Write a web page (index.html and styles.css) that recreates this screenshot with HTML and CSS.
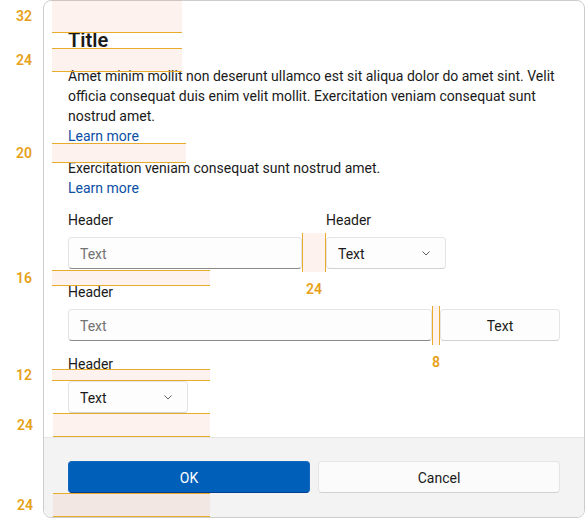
FILE: index.html
```html
<!DOCTYPE html>
<html lang="en">
<head>
<meta charset="utf-8">
<title>Dialog spacing</title>
<link rel="stylesheet" href="styles.css">
</head>
<body>
<div class="stage">
  <div class="dialog">
    <div class="dialog-body">
      <h1 class="title">Title</h1>
      <p class="para">Amet minim mollit non deserunt ullamco est sit aliqua dolor do amet sint. Velit officia consequat duis enim velit mollit. Exercitation veniam consequat sunt nostrud amet.<a class="link" href="#">Learn more</a></p>
      <p class="para">Exercitation veniam consequat sunt nostrud amet.<a class="link" href="#">Learn more</a></p>

      <div class="field-row">
        <div class="field">
          <span class="label">Header</span>
          <div class="textbox textbox-fixed">Text</div>
        </div>
        <div class="field">
          <span class="label">Header</span>
          <div class="combo"><span>Text</span><svg class="chev" width="8" height="5" viewBox="0 0 8 5"><path d="M0.5 0.5 L4 4 L7.5 0.5" fill="none" stroke="#5f5f5f" stroke-width="1"/></svg></div>
        </div>
      </div>

      <div class="field">
        <span class="label">Header</span>
        <div class="inline">
          <div class="textbox textbox-fill">Text</div>
          <div class="btn">Text</div>
        </div>
      </div>

      <div class="field">
        <span class="label">Header</span>
        <div class="combo"><span>Text</span><svg class="chev" width="8" height="5" viewBox="0 0 8 5"><path d="M0.5 0.5 L4 4 L7.5 0.5" fill="none" stroke="#5f5f5f" stroke-width="1"/></svg></div>
      </div>
    </div>
    <div class="dialog-footer">
      <div class="btn btn-accent">OK</div>
      <div class="btn btn-footer">Cancel</div>
    </div>
  </div>

  <div class="spacer s1"><span class="num">32</span></div>
  <div class="spacer s2"><span class="num">24</span></div>
  <div class="spacer s3"><span class="num">20</span></div>
  <div class="spacer s4"><span class="num">16</span></div>
  <div class="spacer s5"><span class="num">12</span></div>
  <div class="spacer s6"><span class="num">24</span></div>
  <div class="spacer s7"><span class="num">24</span></div>

  <div class="vspacer v1"><span class="vnum">24</span></div>
  <div class="vspacer v2"><span class="vnum">8</span></div>
</div>
</body>
</html>
```

FILE: styles.css
```css
html, body {
  margin: 0;
  background: #ffffff;
}

body {
  font-family: Roboto, "Open Sans", sans-serif;
  color: #1a1a1a;
}

.stage {
  position: relative;
  width: 586px;
  height: 523px;
}

.dialog {
  margin-left: 43px;
  width: 542px;
  box-sizing: border-box;
  border: 1px solid #cdcdcd;
  border-radius: 8px;
  overflow: hidden;
  background: #ffffff;
}

.dialog-body {
  padding: 24px;
  display: flex;
  flex-direction: column;
  gap: 12px;
}

.title {
  margin: 0 0 -1px;
  padding-top: 1px;
  font-size: 20px;
  line-height: 28px;
  font-weight: 600;
  color: #1a1a1a;
}

.para {
  margin: 0 0 -1px;
  padding-top: 1px;
  font-size: 14px;
  line-height: 20px;
  color: #1a1a1a;
}

.link {
  display: block;
  color: #0b4fa5;
  text-decoration: none;
}

.field {
  display: flex;
  flex-direction: column;
  gap: 8px;
}

.label {
  display: block;
  margin-bottom: -1px;
  padding-top: 1px;
  font-size: 14px;
  line-height: 20px;
  color: #1a1a1a;
}

.field-row {
  display: flex;
  gap: 24px;
}

.textbox {
  height: 32px;
  box-sizing: border-box;
  border: 1px solid #e5e5e5;
  border-bottom-color: #8a8a8a;
  border-radius: 4px;
  background: #fdfdfd;
  padding: 2px 11px 0;
  display: flex;
  align-items: center;
  font-size: 14px;
  color: #727272;
}

.textbox-fixed {
  width: 234px;
}

.textbox-fill {
  flex: 1;
}

.inline {
  display: flex;
  gap: 8px;
}

.combo {
  width: 120px;
  height: 32px;
  box-sizing: border-box;
  border: 1px solid #e5e5e5;
  border-bottom-color: #d2d2d2;
  border-radius: 4px;
  background: #fdfdfd;
  padding: 2px 15px 0 11px;
  display: flex;
  align-items: center;
  justify-content: space-between;
  font-size: 14px;
  color: #1a1a1a;
}

.chev {
  display: block;
  margin-top: -2px;
}

.btn {
  height: 32px;
  box-sizing: border-box;
  border: 1px solid #e5e5e5;
  border-bottom-color: #d2d2d2;
  border-radius: 4px;
  background: #fdfdfd;
  padding-top: 2px;
  display: flex;
  align-items: center;
  justify-content: center;
  font-size: 14px;
  color: #1a1a1a;
}

.inline .btn {
  width: 120px;
}

.dialog-footer {
  background: #f3f3f3;
  border-top: 1px solid #e5e5e5;
  padding: 23px 24px 24px;
  display: grid;
  grid-template-columns: 1fr 1fr;
  gap: 8px;
}

.btn-accent {
  background: #005fb8;
  border-color: #1367c0;
  border-bottom-color: #003e92;
  color: #ffffff;
}

.btn-footer {
  background: #fbfbfb;
}

/* Spacing annotations (redline overlay) */
.spacer {
  position: absolute;
  left: 52px;
  box-sizing: border-box;
  background: rgba(240, 130, 80, 0.1);
  border-top: 1px solid #e8ab2c;
  border-bottom: 1px solid #e8ab2c;
}

.num {
  position: absolute;
  left: -46px;
  width: 36px;
  top: 50%;
  transform: translateY(-50%);
  text-align: center;
  font-size: 14px;
  font-weight: 600;
  line-height: 16px;
  color: #e6a118;
}

.s1 { top: 0; height: 33px; width: 130px; border-top: none; }
.s2 { top: 48px; height: 24px; width: 130px; }
.s3 { top: 143px; height: 20px; width: 134px; }
.s4 { top: 270px; height: 16px; width: 158px; }
.s5 { top: 369px; height: 12px; width: 158px; }
.s6 { top: 413px; height: 24px; width: 157px; left: 53px; }
.s7 { top: 493px; height: 24px; width: 157px; left: 53px; }

.vspacer {
  position: absolute;
  box-sizing: border-box;
  background: rgba(240, 130, 80, 0.1);
  border-left: 1px solid #e8ab2c;
  border-right: 1px solid #e8ab2c;
}

.vnum {
  position: absolute;
  left: 50%;
  transform: translateX(-50%);
  font-size: 14px;
  font-weight: 600;
  line-height: 16px;
  color: #e6a118;
}

.v1 { left: 302px; top: 233px; width: 24px; height: 39px; }
.v1 .vnum { top: 48px; }
.v2 { left: 432px; top: 306px; width: 8px; height: 39px; }
.v2 .vnum { top: 48px; }
```
